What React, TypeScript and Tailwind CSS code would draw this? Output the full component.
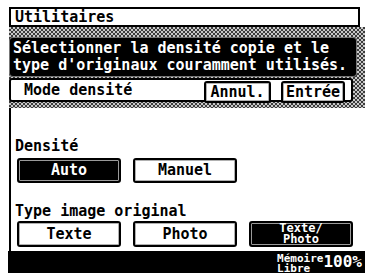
import React from "react";

const dither =
  "bg-[#8e8e8e] bg-[repeating-conic-gradient(#3c3c3c_0%_25%,#c8c8c8_0%_50%)] bg-[length:4px_4px]";

function Btn({
  label,
  dark,
  className,
}: {
  label: React.ReactNode;
  dark?: boolean;
  className: string;
}) {
  return (
    <div
      className={`flex items-center justify-center rounded-[3px] border-2 border-black ${
        dark
          ? "bg-black text-white shadow-[inset_0_0_0_1px_#9a9a9a]"
          : "bg-white text-black shadow-[inset_0_0_0_1px_#b0b0b0]"
      } ${className}`}
    >
      {label}
    </div>
  );
}

export default function App() {
  return (
    <div className="flex h-[273px] w-[365px] flex-col overflow-hidden bg-white font-['DejaVu_Sans_Mono',monospace] text-[15px] font-bold leading-[17px] text-black">
      {/* titre */}
      <div className="ml-[9px] mt-[7px] flex h-[20px] w-[351px] items-center border-2 border-black pl-[4px]">
        Utilitaires
      </div>

      {/* message + mode */}
      <div className={`ml-[9px] flex flex-col pb-[6px] pt-[10px] ${dither}`}>
        <div className="mr-[8px] rounded-[4px] bg-black px-[4px] py-[3px] text-white shadow-[inset_0_0_0_1px_#777]">
          <p>Sélectionner la densité copie et le</p>
          <p>type d'originaux couramment utilisés.</p>
        </div>
        <div className="mr-[12px] mt-[1px] flex h-[24px] items-center rounded-[3px] border-2 border-black bg-white pl-[13px]">
          <span className="flex-1">Mode densité</span>
          <Btn label="Annul." className="mr-[10px] mt-[4px] h-[22px] w-[67px]" />
          <Btn label="Entrée" className="mr-[6px] mt-[4px] h-[22px] w-[64px]" />
        </div>
      </div>

      {/* réglages */}
      <div className="ml-[9px] flex flex-1 flex-col border-l-2 border-black pl-[4px] pt-[30px]">
        <p>Densité</p>
        <div className="ml-[2px] mt-[3px] flex gap-[12px]">
          <Btn label="Auto" dark className="h-[25px] w-[104px]" />
          <Btn label="Manuel" className="h-[25px] w-[104px]" />
        </div>
        <p className="mt-[20px]">Type image original</p>
        <div className="ml-[2px] mt-[1px] flex gap-[12px]">
          <Btn label="Texte" className="h-[26px] w-[104px]" />
          <Btn label="Photo" className="h-[26px] w-[104px]" />
          <Btn
            dark
            className="h-[26px] w-[104px] text-[12px] leading-[11px]"
            label={
              <span className="flex flex-col items-center">
                <span>Texte/</span>
                <span>Photo</span>
              </span>
            }
          />
        </div>
      </div>

      {/* barre mémoire */}
      <div className="ml-[8px] flex h-[22px] shrink-0 items-start justify-end bg-black pr-[3px] text-white">
        <div className="mt-[3px] flex flex-col text-[11px] leading-[10px]">
          <span>Mémoire</span>
          <span>Libre</span>
        </div>
        <span className="mt-[4px] text-[16px] leading-[14px]">100%</span>
      </div>
    </div>
  );
}
